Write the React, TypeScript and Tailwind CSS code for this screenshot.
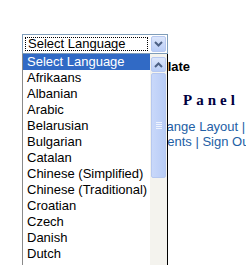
import React from 'react';

const LANGUAGES = [
  'Select Language',
  'Afrikaans',
  'Albanian',
  'Arabic',
  'Belarusian',
  'Bulgarian',
  'Catalan',
  'Chinese (Simplified)',
  'Chinese (Traditional)',
  'Croatian',
  'Czech',
  'Danish',
  'Dutch',
];

const Chevron: React.FC<{ up?: boolean }> = ({ up }) => (
  <svg width="9" height="6" viewBox="0 0 9 6" className="block">
    <path
      d={up ? 'M1 5 L4.5 1.5 L8 5' : 'M1 1 L4.5 4.5 L8 1'}
      fill="none"
      stroke="#4d6185"
      strokeWidth="2"
    />
  </svg>
);

const App: React.FC = () => {
  return (
    <div className="relative w-[246px] h-[265px] overflow-hidden bg-white font-['Liberation_Sans',Arial,sans-serif] text-[13px] leading-[16px] text-black">
      {/* Closed select */}
      <div className="pl-[22px] pt-[34px]">
        <div className="flex w-[146px] h-[20px] border border-[#7f9db9] bg-white p-px">
          <div className="flex-1 flex items-center m-px border border-dotted border-black pl-[2px]">
            Select Language
          </div>
          <div className="w-[15px] ml-[2px] flex items-center justify-center rounded-[2px] border border-[#b6c8f0] bg-gradient-to-b from-[#dce6fb] to-[#b9cdf7]">
            <Chevron />
          </div>
        </div>
      </div>

      {/* Page behind the dropdown */}
      <div className="mt-[5px] ml-[133px] font-bold whitespace-nowrap">Translate</div>
      <div className="mt-[16px] ml-[183px] whitespace-nowrap font-['Liberation_Serif',serif] font-bold text-[15px] leading-[18px] tracking-[4px] text-[#000040]">
        Panel
      </div>
      <div className="mt-[10px] ml-[150px] whitespace-nowrap leading-[15px] text-[#2360a5]">
        Change Layout |
      </div>
      <div className="ml-[129px] whitespace-nowrap leading-[15px] text-[#2360a5]">
        Comments | Sign Out
      </div>

      {/* Open dropdown list */}
      <div className="absolute left-[22px] top-[54px] w-[146px] h-[230px] flex border-l border-l-[#8a8a8a] border-r border-r-black bg-white">
        <div className="flex-1">
          {LANGUAGES.map((lang, i) => (
            <div
              key={lang}
              className={`h-[16px] pl-[4px] whitespace-nowrap ${i === 0 ? 'bg-[#316ac5] text-white' : ''}`}
            >
              {lang}
            </div>
          ))}
        </div>
        <div className="w-[17px] flex flex-col bg-[#f4f3ee] px-px pt-[3px]">
          <div className="h-[15px] flex items-center justify-center rounded-[2px] border border-[#b6c8f0] bg-gradient-to-b from-[#dce6fb] to-[#b9cdf7]">
            <Chevron up />
          </div>
          <div className="mt-px h-[105px] flex flex-col items-center justify-center gap-[1px] rounded-[2px] border border-[#b6c8f0] bg-gradient-to-r from-[#c9d8fa] to-[#b8ccf6]">
            <div className="w-[6px] h-px bg-[#eef3fe]" />
            <div className="w-[6px] h-px bg-[#eef3fe]" />
            <div className="w-[6px] h-px bg-[#eef3fe]" />
            <div className="w-[6px] h-px bg-[#eef3fe]" />
          </div>
        </div>
      </div>
    </div>
  );
};

export default App;
